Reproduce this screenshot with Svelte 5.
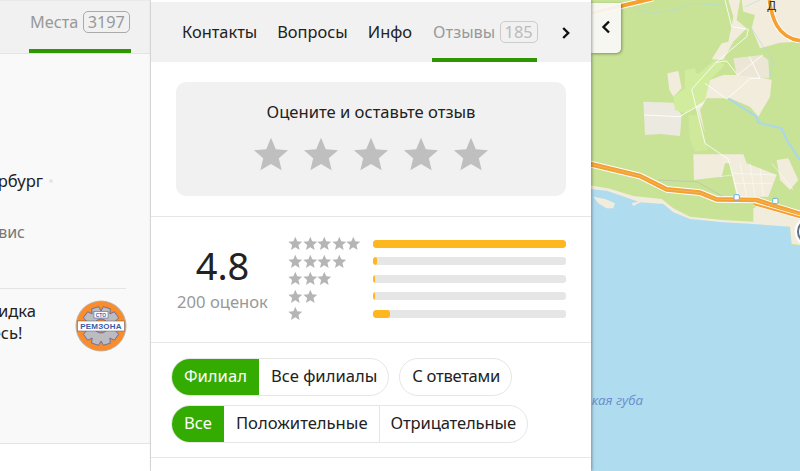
<script>
  const starPath = 'M12 1.2l3.2 7.6 8.2.7-6.2 5.4 1.9 8L12 18.6 4.9 22.9l1.9-8L.6 9.5l8.2-.7z';
  const tabs = ['Контакты', 'Вопросы', 'Инфо'];
  const bars = [
    { stars: 5, fill: 100 },
    { stars: 4, fill: 2 },
    { stars: 3, fill: 1 },
    { stars: 2, fill: 1 },
    { stars: 1, fill: 9 },
  ];

  // gear outline for the logo
  function gear(cx, cy, outer, inner, teeth) {
    const pts = [];
    const step = (Math.PI * 2) / teeth;
    for (let i = 0; i < teeth; i++) {
      const a = i * step;
      for (const [r, d] of [[inner, -0.5], [outer, -0.3], [outer, 0.3], [inner, 0.5]]) {
        const t = a + d * step;
        pts.push((cx + r * Math.cos(t)).toFixed(1) + ',' + (cy + r * Math.sin(t)).toFixed(1));
      }
    }
    return pts.join(' ');
  }
</script>

{#snippet star(cls)}
  <svg class={cls} viewBox="0 0 24 24"><path d={starPath} /></svg>
{/snippet}

<div class="page">
  <aside class="left">
    <div class="left-tabs">
      <div class="left-tab">Места <span class="badge">3197</span></div>
    </div>
    <div class="list">
      <div class="city">Санкт-Петербург<i class="dot"></i></div>
      <div class="kind">Автосервис</div>
      <hr class="list-line" />
      <div class="promo">
        <div class="promo-text">Зимняя скидка<br />только здесь!</div>
        <svg class="logo" viewBox="0 0 52 52">
          <circle cx="26" cy="26" r="25.5" fill="#b9b4ac" />
          <circle cx="26" cy="26" r="24.5" fill="#fb8c2b" />
          <polygon points={gear(26, 26, 19.5, 15, 10)} fill="#bcbcc0" stroke="#4c66a8" stroke-width="0.8" />
          <circle cx="26" cy="26" r="7" fill="#fb8c2b" stroke="#4c66a8" stroke-width="0.8" />
          <rect x="19" y="11.5" width="14" height="6.5" fill="#fff" stroke="#4c66a8" stroke-width="0.6" />
          <text x="26" y="17" class="logo-sto">СТО</text>
          <rect x="2.5" y="21" width="47" height="10" fill="#fff" stroke="#555" stroke-width="0.5" />
          <text x="26" y="29.3" class="logo-name">РЕМЗОНА</text>
        </svg>
      </div>
    </div>
    <div class="left-foot"></div>
  </aside>

  <main class="panel">
    <nav class="tabs">
      {#each tabs as t}
        <span class="tab">{t}</span>
      {/each}
      <span class="tab active">Отзывы <span class="badge faded">185</span></span>
      <svg class="next" viewBox="0 0 8 12"><path d="M1.2 1L6.2 6 1.2 11" /></svg>
    </nav>

    <section class="rate">
      <div class="rate-card">
        <div class="rate-title">Оцените и оставьте отзыв</div>
        <div class="rate-stars">
          {#each [1, 2, 3, 4, 5] as n (n)}
            {@render star('big-star')}
          {/each}
        </div>
      </div>
    </section>

    <section class="summary">
      <div class="score">
        <div class="score-value">4.8</div>
        <div class="score-count">200 оценок</div>
      </div>
      <div class="histogram">
        {#each bars as bar}
          <div class="hist-row">
            <div class="hist-stars">
              {#each Array(bar.stars) as _}
                {@render star('small-star')}
              {/each}
            </div>
            <div class="track"><div class="fill" style="width: {bar.fill}%"></div></div>
          </div>
        {/each}
      </div>
    </section>

    <section class="filters">
      <div class="filter-row">
        <div class="group">
          <span class="chip on">Филиал</span>
          <span class="chip">Все филиалы</span>
        </div>
        <div class="group">
          <span class="chip tight">С ответами</span>
        </div>
      </div>
      <div class="filter-row">
        <div class="group">
          <span class="chip on">Все</span>
          <span class="chip">Положительные</span>
          <span class="chip sep">Отрицательные</span>
        </div>
      </div>
    </section>
  </main>

  <div class="map">
    <svg class="map-art" viewBox="0 0 630 1413">
      <rect width="630" height="1413" fill="#b0dcf0" />
      <path d="M0 0H630V735H605L600 680L490 670L400 665L300 655L250 635L220 610L150 605L50 570L0 565Z" fill="#c8e296" />
      <!-- shore sand -->
      <path d="M0 556L60 566L130 588L215 597L250 625L300 650L400 660L490 665V625L520 612L630 650V735L605 732L600 680L490 672L400 667L300 657L250 637L220 612L150 607L50 572L0 567Z" fill="#f2ecdc" />
      <path d="M10 590L45 597L75 610L70 625L50 625L25 610ZM125 610L165 600L130 618Z" fill="#f2ecdc" />
      <!-- town areas -->
      <path d="M455 0H630V125L570 128L510 145L485 85L495 45L460 35Z" fill="#f2ecdc" />
      <path d="M415 0H450L440 60L470 85L430 125L400 180L365 178L395 130L415 125L430 50Z" fill="#f2ecdc" />
      <path d="M315 220L360 240L400 225H485L545 240L540 290L505 350L480 320L420 295L350 295L330 330L345 400L315 310Z" fill="#f2ecdc" />
      <path d="M430 175L515 165L535 180L538 235L440 225Z" fill="#ebe6d6" />
      <path d="M232 220L265 213L275 265L250 290L238 270Z" fill="#f2ecdc" />
      <path d="M160 305L250 308L275 345L270 408L210 402L165 405Z" fill="#ebe9e0" />
      <path d="M310 463H460L470 490H405L395 530L312 540Z" fill="#f2ecdc" />
      <path d="M418 480L470 490L560 525L535 590L440 590Z" fill="#f2ecdc" />
      <path d="M560 480L595 475L625 540L600 570L570 540Z" fill="#f2ecdc" />
      <!-- light forest -->
      <path d="M285 210L315 205L320 225L375 180L405 195L360 240L345 300L310 325L285 340L255 330L250 290L285 265Z" fill="#d0ec9c" />
      <path d="M295 345L325 345L355 450L315 455L300 420Z" fill="#cfe89a" />
      <!-- streets -->
      <g fill="none" stroke="#fff" stroke-width="2.5" stroke-linejoin="round">
        <path d="M405 0L425 80L475 88L470 110L378 187L305 268L345 430L415 478L445 590" />
        <path d="M378 187L410 183L443 225L518 165M478 170L510 235L482 235L410 297L345 250" />
        <path d="M162 345L270 350L285 340L340 310" />
        <path d="M425 520L560 525M430 550L545 550M450 490L470 590M480 490L495 590M510 505L520 590M390 530L425 525M545 490L610 570" stroke-width="1.5" />
      </g>
      <!-- rivers -->
      <g fill="none" stroke="#a9d8ee" stroke-width="3">
        <path d="M415 295L500 350L505 368L575 385L590 420L630 480" stroke-width="6" />
        <path d="M130 22L180 40L260 30L300 10L400 15M465 20L510 0M485 85L520 140L550 180L540 235" stroke-width="1.5" />
      </g>
      <path d="M205 540L320 545L400 590" fill="none" stroke="#bdbdb5" stroke-width="2" />
      <!-- roads -->
      <g fill="none" stroke-linejoin="round">
        <path d="M0 40L190 -5" stroke="#fff" stroke-width="18" />
        <path d="M0 40L190 -5" stroke="#f5a030" stroke-width="12" />
        <path d="M538 0C545 50 560 112 630 122" stroke="#fff" stroke-width="16" />
        <path d="M538 0C545 50 560 112 630 122" stroke="#f5a030" stroke-width="11" />
        <path d="M0 492L150 528L230 568L330 578L380 598L500 600L565 622L630 642" stroke="#fff" stroke-width="20" />
        <path d="M0 492L150 528L230 568L330 578L380 598L500 600L565 622L630 642" stroke="#f5a030" stroke-width="14" />
        <path d="M0 492L150 528L230 568L330 578L380 598L500 600L565 622L630 642" stroke="#e8c070" stroke-width="2" />
        <path d="M490 612L520 620L630 652" stroke="#fff" stroke-width="10" />
        <path d="M490 612L520 620L630 652" stroke="#f5a030" stroke-width="6" />
      </g>
      <g fill="#fff" stroke="#5db0ea" stroke-width="3">
        <rect x="432" y="584" width="16" height="16" rx="4" />
        <rect x="548" y="595" width="16" height="16" rx="4" />
      </g>
      <circle cx="660" cy="695" r="46" fill="#fff" />
      <circle cx="660" cy="695" r="36" fill="#fff" stroke="#5f6f80" stroke-width="6" />
      <text x="5" y="1216" class="bay">кая губа</text>
      <text x="532" y="30" class="road-label">Д</text>
    </svg>
    <button class="collapse" aria-label="Свернуть">
      <svg viewBox="0 0 10 14"><path d="M8 1.5L2.5 7 8 12.5" /></svg>
    </button>
  </div>
</div>

<style>
  :global(body) {
    margin: 0;
    font-family: "Noto Sans", "Open Sans", sans-serif;
    font-size: 16.6px;
    color: #222;
  }
  .page {
    display: flex;
    width: 800px;
    height: 471px;
    overflow: hidden;
    background: #fff;
  }

  /* left results column, mostly hidden behind the panel */
  .left {
    flex: none;
    width: 150px;
    display: flex;
    flex-direction: column;
    overflow: hidden;
    border-right: 1px solid #e2e2e2;
  }
  .left-tabs {
    flex: none;
    height: 53px;
    display: flex;
    justify-content: flex-end;
    padding-right: 19px;
    background: #f1f1f1;
    box-shadow: inset 0 1px #e9e9e9;
    border-bottom: 1px solid #e4e4e4;
  }
  .left-tab {
    height: 53px;
    box-sizing: border-box;
    padding: 11px 0 0 1px;
    width: 102px;
    border-bottom: 4px solid #2e9600;
    color: #999;
    font-size: 16.3px;
    line-height: 22px;
    white-space: nowrap;
  }
  .badge {
    display: inline-block;
    box-sizing: border-box;
    height: 22px;
    padding: 0 4px;
    border: 1px solid #aaa;
    border-radius: 5px;
    line-height: 20px;
  }
  .badge.faded {
    color: #bbb;
    border-color: #ccc;
  }
  .list {
    flex: 1;
    background: #f9f9f9;
    padding: 116px 0 0;
    border-bottom: 1px solid #e4e4e4;
    overflow: hidden;
  }
  .city, .kind {
    display: flex;
    justify-content: flex-end;
    white-space: nowrap;
    line-height: 22px;
  }
  .city {
    align-items: center;
    padding-right: 97px;
  }
  .dot {
    flex: none;
    width: 4px;
    height: 4px;
    margin-left: 6px;
    background: #e6e6e6;
    border-radius: 50%;
  }
  .kind {
    margin-top: 29px;
    padding-right: 125px;
    color: #777;
    font-size: 16px;
  }
  .list-line {
    width: 126px;
    margin: 45px 0 0;
    border: 0;
    border-top: 1px solid #e4e4e4;
  }
  .promo {
    width: 127px;
    display: flex;
    justify-content: flex-end;
    margin-top: 11px;
  }
  .promo-text {
    flex: none;
    margin-right: 39px;
    white-space: nowrap;
    line-height: 22px;
  }
  .logo {
    flex: none;
    width: 52px;
    height: 52px;
  }
  .logo-sto {
    font: 700 5px "Liberation Sans", sans-serif;
    fill: #4c66a8;
    text-anchor: middle;
  }
  .logo-name {
    font: 700 8px "Liberation Sans", sans-serif;
    fill: #3c5aa6;
    text-anchor: middle;
    letter-spacing: 0.2px;
  }
  .left-foot {
    flex: none;
    height: 27px;
    background: #fff;
  }

  /* reviews panel */
  .panel {
    position: relative;
    z-index: 1;
    flex: none;
    width: 440px;
    background: #fff;
    box-shadow: 1px 0 3px rgba(0, 0, 0, 0.35);
  }
  .tabs {
    display: flex;
    align-items: flex-start;
    height: 60px;
    margin-top: 2px;
    padding-left: 31px;
    gap: 20px;
    background: #f1f1f1;
    font-size: 16.4px;
    line-height: 22px;
    white-space: nowrap;
  }
  .tab {
    height: 60px;
    box-sizing: border-box;
    padding-top: 19px;
  }
  .tab.active {
    width: 105px;
    padding-left: 1px;
    border-bottom: 4px solid #2e9600;
    color: #999;
  }
  .next {
    width: 8px;
    height: 12px;
    margin: 25px 0 0 5px;
    flex: none;
  }
  .next path, .collapse path {
    fill: none;
    stroke: #111;
    stroke-width: 2.4;
  }
  .rate {
    padding: 20px 25px;
    border-bottom: 1px solid #e6e6e6;
  }
  .rate-card {
    height: 114px;
    box-sizing: border-box;
    padding-top: 19px;
    background: #f1f1f1;
    border-radius: 10px;
    text-align: center;
  }
  .rate-title {
    line-height: 22px;
  }
  .rate-stars {
    display: flex;
    justify-content: center;
    gap: 14px;
    margin-top: 13px;
  }
  .big-star {
    width: 36px;
    height: 36px;
    fill: #bfbfbf;
  }
  .summary {
    display: flex;
    height: 126px;
    box-sizing: border-box;
    border-bottom: 1px solid #e6e6e6;
    padding: 23px 25px 0 25px;
  }
  .score {
    flex: none;
    width: 93px;
    text-align: center;
    white-space: nowrap;
  }
  .score-value {
    font-size: 38px;
    line-height: 50px;
    color: #222;
  }
  .score-count {
    margin-top: 1px;
    line-height: 22px;
    color: #999;
  }
  .histogram {
    flex: 1;
    margin: -5px 0 0 19px;
  }
  .hist-row {
    display: flex;
    align-items: center;
    height: 17.5px;
  }
  .hist-stars {
    flex: none;
    display: flex;
    width: 85px;
  }
  .small-star {
    flex: none;
    width: 14.6px;
    height: 14.6px;
    fill: #b5b5b5;
  }
  .track {
    flex: 1;
    height: 8px;
    background: #e6e6e6;
    border-radius: 3px;
    overflow: hidden;
  }
  .fill {
    height: 100%;
    background: #ffb71f;
    border-radius: 3px;
  }
  .filters {
    padding: 15px 0 14px 20px;
    border-bottom: 1px solid #e6e6e6;
  }
  .filter-row {
    display: flex;
    gap: 10px;
  }
  .filter-row + .filter-row {
    margin-top: 9px;
  }
  .group {
    display: flex;
    height: 38px;
    box-sizing: border-box;
    border: 1px solid #e6e6e6;
    border-radius: 19px;
    overflow: hidden;
  }
  .chip {
    padding: 0 11px 0 12px;
    line-height: 34px;
    white-space: nowrap;
  }
  .chip.tight {
    letter-spacing: -0.3px;
  }
  .chip.on {
    margin: -1px 0 -1px -1px;
    padding: 0 12px 0 13px;
    background: #34ab00;
    color: #fff;
    line-height: 36px;
  }
  .chip.sep {
    padding: 0 11px;
    letter-spacing: -0.15px;
    border-left: 1px solid #e6e6e6;
  }

  /* map */
  .map {
    position: relative;
    flex: 1;
    overflow: hidden;
  }
  .map-art {
    display: block;
    width: 210px;
    height: 471px;
    margin-left: -1px;
  }
  .bay {
    font: italic 40px "Open Sans", sans-serif;
    fill: #6a8ccb;
  }
  .road-label {
    font: 36px "Noto Sans", sans-serif;
    fill: #333;
  }
  .collapse {
    position: absolute;
    left: 0;
    top: 3px;
    width: 30px;
    height: 50px;
    padding: 0;
    border: 0;
    border-radius: 0 0 5px 0;
    background: rgba(250, 250, 250, 0.9);
    box-shadow: 1px 1px 3px rgba(0, 0, 0, 0.35);
    display: flex;
    align-items: center;
    justify-content: center;
  }
  .collapse svg {
    width: 10px;
    height: 14px;
    margin-bottom: 2px;
  }
</style>
